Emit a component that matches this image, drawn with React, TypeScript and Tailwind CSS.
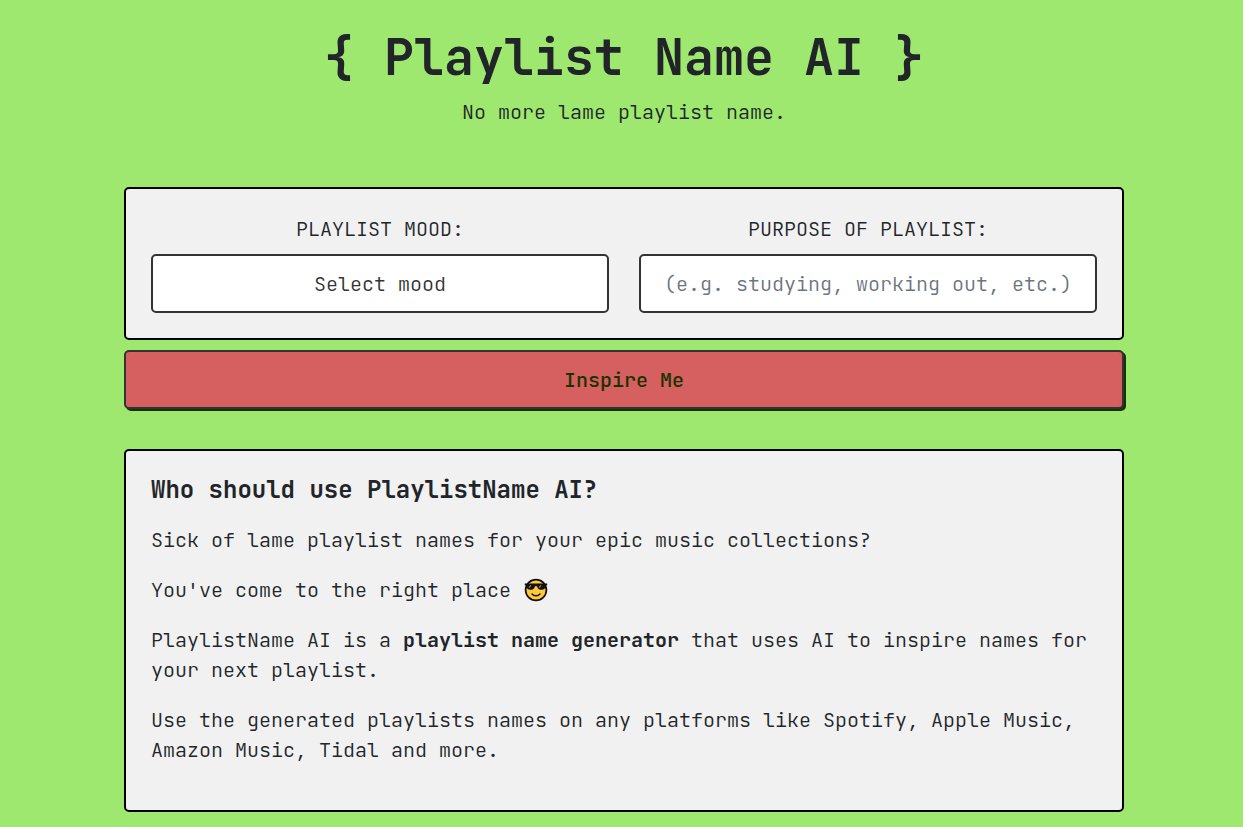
import { useState } from "react";

const moods = ["Happy", "Chill", "Sad", "Energetic", "Romantic"];

const fieldClass =
  "h-[59px] w-full appearance-none rounded-[5px] border-2 border-[#333333] bg-white px-2 text-center text-[20px] leading-[30px] text-[#333333] placeholder:text-[#6c757d] placeholder:opacity-100";

function SunglassesFace() {
  return (
    <svg
      viewBox="0 0 24 24"
      className="ml-px inline-block h-6 w-6 align-[-5px]"
      role="img"
      aria-label="smiling face with sunglasses"
    >
      <circle cx="12" cy="12" r="10.4" fill="#ffc83d" stroke="#111" strokeWidth="1.7" />
      <path
        d="M.8 5.4h22.4v1.8l-1.4.6c-.3 2.8-1.6 4-4.2 4-2.5 0-3.9-1.2-4.5-3.4-.2-.7-2-.7-2.2 0-.6 2.2-2 3.4-4.5 3.4-2.6 0-3.9-1.2-4.2-4l-1.4-.6z"
        fill="#111"
      />
      <path
        d="M5 9.6 7 7.4M15 9.6l2-2.2"
        stroke="#888"
        strokeWidth="1.2"
      />
      <path
        d="M8 16c2 2.4 6 2.4 8 0"
        fill="none"
        stroke="#111"
        strokeWidth="1.4"
        strokeLinecap="round"
      />
    </svg>
  );
}

function PlaylistForm() {
  const [mood, setMood] = useState("");
  const [purpose, setPurpose] = useState("");

  return (
    <form className="flex flex-col gap-[10px]" onSubmit={(e) => e.preventDefault()}>
      <div className="grid gap-[30px] rounded-[5px] border-2 border-black bg-[#f1f1f1] p-[25px] md:grid-cols-2">
        <div className="flex flex-col gap-[10px] text-center">
          <label htmlFor="mood" className="uppercase">
            Playlist mood:
          </label>
          <select
            id="mood"
            value={mood}
            onChange={(e) => setMood(e.target.value)}
            className={`${fieldClass} [text-align-last:center]`}
          >
            <option value="">Select mood</option>
            {moods.map((item) => (
              <option key={item} value={item}>
                {item}
              </option>
            ))}
          </select>
        </div>
        <div className="flex flex-col gap-[10px] text-center">
          <label htmlFor="purpose" className="uppercase">
            Purpose of playlist:
          </label>
          <input
            id="purpose"
            type="text"
            value={purpose}
            onChange={(e) => setPurpose(e.target.value)}
            placeholder="(e.g. studying, working out, etc.)"
            className={fieldClass}
          />
        </div>
      </div>
      <button
        type="submit"
        className="h-[59px] w-full rounded-[5px] border-2 border-[#333333] bg-[#d65f5f] font-medium text-[#163300] shadow-[2px_2px_0_0_#163300]"
      >
        Inspire Me
      </button>
    </form>
  );
}

function About() {
  return (
    <section className="flex flex-col gap-5 rounded-[5px] border-2 border-black bg-[#f1f1f1] px-[25px] pt-6 pb-[45px]">
      <h2 className="text-[24px] leading-[30px] font-semibold">
        Who should use PlaylistName AI?
      </h2>
      <p>Sick of lame playlist names for your epic music collections?</p>
      <p>
        You've come to the right place <SunglassesFace />
      </p>
      <p>
        PlaylistName AI is a{" "}
        <strong className="font-semibold">playlist name generator</strong> that
        uses AI to inspire names for your next playlist.
      </p>
      <p>
        Use the generated playlists names on any platforms like Spotify, Apple
        Music, Amazon Music, Tidal and more.
      </p>
    </section>
  );
}

export default function App() {
  return (
    <div className="min-h-screen bg-[#9fe870] pt-[27px] pb-[15px] pl-[5px] font-['JetBrains_Mono','DejaVu_Sans_Mono',monospace] text-[20px] leading-[30px] font-light text-[#212529]">
      <main className="mx-auto flex max-w-[1000px] flex-col gap-10">
        <header className="mb-5 flex flex-col gap-[10px] text-center">
          <h1 className="text-[50px] leading-[60px] font-semibold">
            {"{ Playlist Name AI }"}
          </h1>
          <p>No more lame playlist name.</p>
        </header>
        <PlaylistForm />
        <About />
      </main>
    </div>
  );
}
